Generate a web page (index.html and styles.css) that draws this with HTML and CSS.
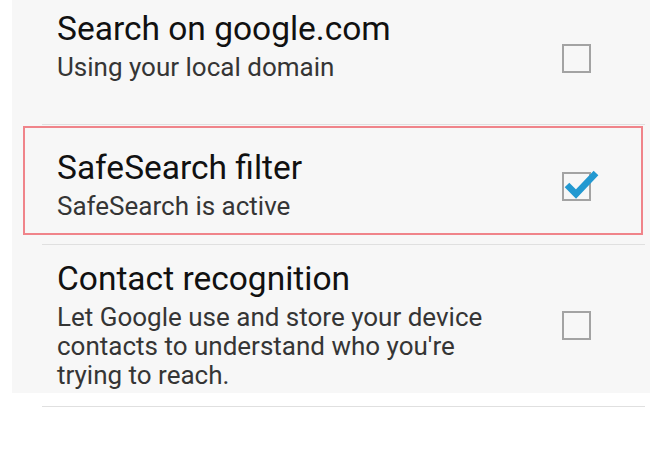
FILE: index.html
```html
<!DOCTYPE html>
<html>
<head>
    <title>Search settings</title>
    <link rel="stylesheet" href="styles.css">
</head>
<body>
    <div class="list">
        <div class="item item-first">
            <div class="item-text">
                <div class="title">Search on google.com</div>
                <div class="summary">Using your local domain</div>
            </div>
            <svg class="check" width="40" height="36" viewBox="0 0 40 36">
                <rect x="1" y="6" width="27" height="27" fill="none" stroke="#a3a3a3" stroke-width="2"/>
            </svg>
        </div>

        <div class="item item-highlight">
            <div class="item-text">
                <div class="title">SafeSearch filter</div>
                <div class="summary">SafeSearch is active</div>
            </div>
            <svg class="check" width="40" height="36" viewBox="0 0 40 36">
                <rect x="1" y="6" width="27" height="27" fill="none" stroke="#a3a3a3" stroke-width="2"/>
                <path d="M5 18 L14 27 L34 6" fill="none" stroke="#2399d1" stroke-width="6.5"/>
            </svg>
        </div>

        <div class="item item-last">
            <div class="item-text">
                <div class="title">Contact recognition</div>
                <div class="summary">Let Google use and store your device contacts to understand who you're trying to reach.</div>
            </div>
            <svg class="check" width="40" height="36" viewBox="0 0 40 36">
                <rect x="1" y="6" width="27" height="27" fill="none" stroke="#a3a3a3" stroke-width="2"/>
            </svg>
        </div>
    </div>
</body>
</html>
```

FILE: styles.css
```css
body {
    margin: 0;
    background-color: #ffffff;
    font-family: Roboto, "Noto Sans", sans-serif;
}

.list {
    margin-left: 12px;
    /* grey panel stops a little above the last divider */
    background: linear-gradient(#f7f7f7, #f7f7f7) top / 100% calc(100% - 14px) no-repeat;
}

.item {
    position: relative;
    display: flex;
    align-items: center;
    justify-content: space-between;
    margin: 0 5px 0 30px;
    padding: 0 43px 0 15px;
    border-bottom: 1px solid #e0e0e0;
}

.item-text {
    max-width: 440px;
}

.item-first .item-text {
    padding: 10px 0 42px;
}

.item-first .check {
    margin-bottom: 10px;
}

.item-highlight .item-text {
    padding: 24px 0 23px;
}

.item-last .item-text {
    padding: 15px 0 16px;
}

.item-last .check {
    margin-bottom: 4px;
}

/* red marker drawn round the selected row */
.item-highlight::before {
    content: "";
    position: absolute;
    left: -19px;
    right: 2px;
    top: 1px;
    bottom: 9px;
    border: 2px solid #f0848a;
}

.title {
    font-size: 33.5px;
    line-height: 38px;
    color: #111111;
    margin-bottom: 5px;
}

.summary {
    font-size: 26px;
    line-height: 29px;
    color: #353535;
}

.check {
    display: block;
    flex-shrink: 0;
}
```
